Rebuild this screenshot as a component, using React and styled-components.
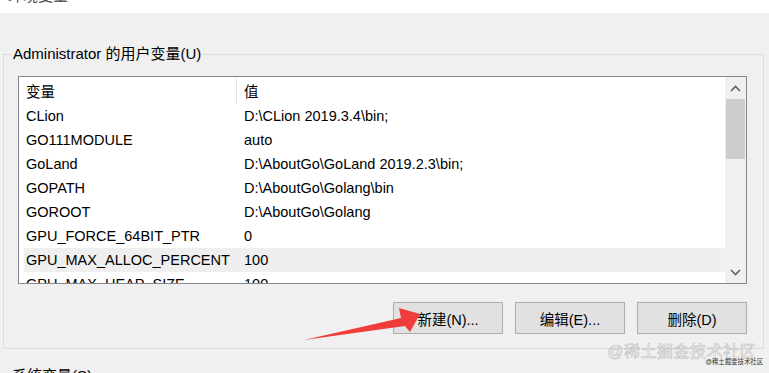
import React from 'react';
import styled, { createGlobalStyle } from 'styled-components';

const GlobalStyle = createGlobalStyle`
    html, body {
        margin: 0;
        padding: 0;
        background: #f0f0f0;
        overflow: hidden;
    }
    body {
        font-family: "Liberation Sans", "Noto Sans CJK SC", sans-serif;
        color: #000;
    }
`;

const Page = styled.div`
    position: relative;
    width: 769px;
    height: 373px;
    overflow: hidden;
`;

/* cut-off dialog title at the very top */
const TitleStrip = styled.div`
    height: 13px;
    background: #fff;
    overflow: hidden;
    padding-left: 8px;
    font-size: 15px;
    line-height: 20px;
    color: #444;

    span {
        display: block;
        margin-top: -14px;
    }
`;

const Group = styled.fieldset`
    margin: 32px 0 0 3px;
    padding: 13px 15px 19px 14px;
    width: 730px;
    height: 270px;
    border: 1px solid #dcdcdc;
    border-radius: 0;
`;

const Legend = styled.legend`
    margin-left: -6px;
    padding: 0 2px 0 1px;
    font-size: 15px;
    line-height: 18px;
`;

const ListBox = styled.div`
    display: flex;
    width: 727px;
    height: 206px;
    border: 1px solid #828790;
    background: #fff;
`;

const ListBody = styled.div`
    flex: 1;
    overflow: hidden;
    font-size: 14.5px;
`;

const HeaderRow = styled.div`
    display: flex;
    height: 27px;
    align-items: center;
    margin-left: 5px;
`;

const Row = styled.div`
    display: flex;
    height: 24px;
    align-items: center;
    margin-left: 5px;
    background: ${p => (p.$selected ? '#efefef' : 'transparent')};
`;

const NameCell = styled.div`
    width: 210px;
    padding-left: 2px;
    white-space: nowrap;
`;

const ValueCell = styled.div`
    flex: 1;
    padding-left: 7px;
    white-space: nowrap;
    border-left: 1px solid ${p => (p.$head ? '#e5e5e5' : 'transparent')};
    align-self: stretch;
    display: flex;
    align-items: center;
`;

const ScrollBar = styled.div`
    width: 21px;
    display: flex;
    flex-direction: column;
    background: #f0f0f0;
`;

const ScrollArrow = styled.div`
    height: 22px;
    display: flex;
    align-items: center;
    justify-content: center;
`;

const Thumb = styled.div`
    margin: 0 1px;
    height: 60px;
    background: #cdcdcd;
`;

const Track = styled.div`
    flex: 1;
`;

const ButtonRow = styled.div`
    display: flex;
    justify-content: flex-end;
    gap: 12px;
    margin-top: 18px;
    width: 729px;
`;

const Button = styled.div`
    width: 108px;
    height: 30px;
    border: 1px solid #adadad;
    background: #e1e1e1;
    display: flex;
    align-items: center;
    justify-content: center;
    font-size: 14.5px;
`;

const NextLabel = styled.div`
    margin: 15px 0 0 12px;
    font-size: 15px;
`;

const Arrow = styled.svg`
    position: absolute;
    left: 0;
    top: 0;
    pointer-events: none;
`;

const Watermark = styled.div`
    position: absolute;
    right: 13px;
    top: 338px;
    font-size: 16px;
    color: rgba(255, 255, 255, 0.5);
    -webkit-text-stroke: 0.6px rgba(140, 140, 140, 0.5);
    letter-spacing: 0.5px;
`;

const SmallMark = styled.div`
    position: absolute;
    right: 6px;
    top: 357px;
    font-size: 8px;
    color: #333;
    transform: scale(0.8);
    transform-origin: right top;
`;

const Chevron = ({ up }) => (
    <svg width="11" height="7" viewBox="0 0 11 7">
        <path
            d={up ? 'M1 6 L5.5 1.5 L10 6' : 'M1 1 L5.5 5.5 L10 1'}
            fill="none"
            stroke="#606060"
            strokeWidth="1.6"
        />
    </svg>
);

const vars = [
    ['CLion', 'D:\\CLion 2019.3.4\\bin;'],
    ['GO111MODULE', 'auto'],
    ['GoLand', 'D:\\AboutGo\\GoLand 2019.2.3\\bin;'],
    ['GOPATH', 'D:\\AboutGo\\Golang\\bin'],
    ['GOROOT', 'D:\\AboutGo\\Golang'],
    ['GPU_FORCE_64BIT_PTR', '0'],
    ['GPU_MAX_ALLOC_PERCENT', '100'],
    ['GPU_MAX_HEAP_SIZE', '100'],
];

export default function App() {
    return (
        <Page>
            <GlobalStyle />
            <TitleStrip><span>环境变量</span></TitleStrip>

            <Group>
                <Legend>Administrator 的用户变量(U)</Legend>
                <ListBox>
                    <ListBody>
                        <HeaderRow>
                            <NameCell>变量</NameCell>
                            <ValueCell $head>值</ValueCell>
                        </HeaderRow>
                        {vars.map(([name, value], i) => (
                            <Row key={name} $selected={i === 6}>
                                <NameCell>{name}</NameCell>
                                <ValueCell>{value}</ValueCell>
                            </Row>
                        ))}
                    </ListBody>
                    <ScrollBar>
                        <ScrollArrow><Chevron up /></ScrollArrow>
                        <Thumb />
                        <Track />
                        <ScrollArrow><Chevron /></ScrollArrow>
                    </ScrollBar>
                </ListBox>
                <ButtonRow>
                    <Button>新建(N)...</Button>
                    <Button>编辑(E)...</Button>
                    <Button>删除(D)</Button>
                </ButtonRow>
            </Group>

            <NextLabel>系统变量(S)</NextLabel>

            {/* red annotation arrow */}
            <Arrow width="769" height="373">
                <polygon
                    points="304,340 401,318 399,308 420,314 410,332 405,326"
                    fill="#f03c3a"
                />
            </Arrow>

            <Watermark>@稀土掘金技术社区</Watermark>
            <SmallMark>@稀土掘金技术社区</SmallMark>
        </Page>
    );
}
